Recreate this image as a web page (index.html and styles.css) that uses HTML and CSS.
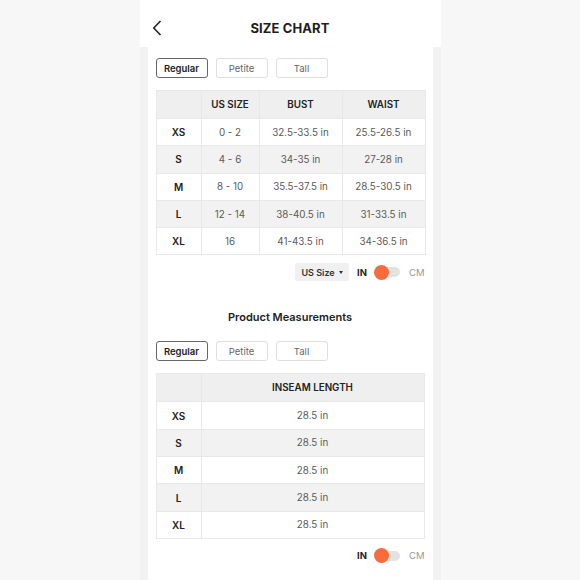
FILE: index.html
```html
<!DOCTYPE html>
<html>
<head>
<meta charset="utf-8">
<link rel="stylesheet" href="styles.css">
</head>
<body>
<div class="phone">
  <header class="topbar">
    <span class="back">
      <svg width="10" height="16" viewBox="0 0 10 16"><path d="M8.5 1 L1.8 8 L8.5 15" fill="none" stroke="#222" stroke-width="1.6"/></svg>
    </span>
    <h1 class="title">SIZE CHART</h1>
    <span></span>
  </header>
  <div class="content">
    <div class="card">
      <div class="tabs">
        <button class="tab active">Regular</button>
        <button class="tab">Petite</button>
        <button class="tab">Tall</button>
      </div>
      <table class="chart">
        <colgroup><col class="c0"><col class="c1"><col class="c2"><col class="c3"></colgroup>
        <thead><tr><th></th><th>US SIZE</th><th>BUST</th><th>WAIST</th></tr></thead>
        <tbody>
          <tr><th>XS</th><td>0 - 2</td><td>32.5-33.5 in</td><td>25.5-26.5 in</td></tr>
          <tr><th>S</th><td>4 - 6</td><td>34-35 in</td><td>27-28 in</td></tr>
          <tr><th>M</th><td>8 - 10</td><td>35.5-37.5 in</td><td>28.5-30.5 in</td></tr>
          <tr><th>L</th><td>12 - 14</td><td>38-40.5 in</td><td>31-33.5 in</td></tr>
          <tr><th>XL</th><td>16</td><td>41-43.5 in</td><td>34-36.5 in</td></tr>
        </tbody>
      </table>
      <div class="controls">
        <span class="select">US Size <span class="caret"></span></span>
        <span class="unit on">IN</span>
        <span class="switch"><span class="knob"></span></span>
        <span class="unit">CM</span>
      </div>

      <h2 class="subtitle">Product Measurements</h2>
      <div class="tabs">
        <button class="tab active">Regular</button>
        <button class="tab">Petite</button>
        <button class="tab">Tall</button>
      </div>
      <table class="chart">
        <colgroup><col class="c0"><col></colgroup>
        <thead><tr><th></th><th>INSEAM LENGTH</th></tr></thead>
        <tbody>
          <tr><th>XS</th><td>28.5 in</td></tr>
          <tr><th>S</th><td>28.5 in</td></tr>
          <tr><th>M</th><td>28.5 in</td></tr>
          <tr><th>L</th><td>28.5 in</td></tr>
          <tr><th>XL</th><td>28.5 in</td></tr>
        </tbody>
      </table>
      <div class="controls">
        <span class="unit on">IN</span>
        <span class="switch"><span class="knob"></span></span>
        <span class="unit">CM</span>
      </div>
    </div>
  </div>
</div>
</body>
</html>
```
FILE: styles.css
```css
* { box-sizing: border-box; }
html, body { margin: 0; padding: 0; }
body {
  background: #f7f7f8;
  font-family: Inter, "Noto Sans", "Liberation Sans", sans-serif;
  color: #222;
  height: 580px;
  overflow: hidden;
}
.phone {
  width: 301px;
  margin: 0 auto;
  background: #fff;
}
.topbar {
  height: 47px;
  display: grid;
  grid-template-columns: 1fr auto 1fr;
  align-items: center;
  background: #fff;
  padding: 0 12px;
}
.back { display: flex; align-items: center; padding-top: 9px; }
.title {
  margin: 0;
  font-size: 13px;
  font-weight: 700;
  letter-spacing: 0.1px;
  color: #1e1e1e;
  padding-top: 8px;
}
.content {
  background: #f2f2f3;
  padding: 0 8px;
}
.card {
  background: #fff;
  padding: 11px 8px 22px;
}
.tabs {
  display: flex;
  gap: 8px;
}
.tab {
  width: 52px;
  height: 20px;
  border: 1px solid #dedede;
  border-radius: 3px;
  background: #fff;
  font-family: inherit;
  font-size: 9.5px;
  color: #666;
  padding: 0;
}
.tab.active {
  border-color: #666;
  color: #222;
  font-weight: 600;
}
.chart {
  width: 269px;
  border-collapse: collapse;
  margin-top: 12px;
  border: 1px solid #ececec;
  table-layout: fixed;
}
.c0 { width: 45px; }
.c1 { width: 58px; }
.c2 { width: 83px; }
.c3 { width: 83px; }
.chart th, .chart td {
  border: 1px solid #e8e8e8;
  text-align: center;
  font-size: 9.8px;
  padding: 0;
}
.chart thead tr { height: 28px; background: #efefef; }
.chart thead th { font-weight: 600; color: #222; }
.chart tbody tr { height: 27.3px; }
.chart tbody tr:nth-child(even) { background: #f2f2f2; }
.chart tbody th { font-weight: 600; color: #222; font-size: 10px; }
.chart td { color: #5a5a5a; }
.controls {
  display: flex;
  justify-content: flex-end;
  align-items: center;
  margin-top: 8px;
  height: 18px;
}
.select {
  display: flex;
  align-items: center;
  gap: 4px;
  background: #f0f0f0;
  height: 18px;
  width: 54px;
  justify-content: center;
  font-size: 9px;
  font-weight: 600;
  color: #333;
  border-radius: 2px;
  margin-right: 8px;
}
.caret {
  width: 0; height: 0;
  border-left: 2.5px solid transparent;
  border-right: 2.5px solid transparent;
  border-top: 3px solid #333;
}
.unit {
  font-size: 9.5px;
  color: #999;
}
.unit.on { font-weight: 700; color: #222; margin-right: 8px; }
.switch {
  position: relative;
  width: 25px;
  height: 10px;
  background: #e2e2e2;
  border-radius: 5px;
  margin-right: 9px;
}
.knob {
  position: absolute;
  left: -1px;
  top: -2.5px;
  width: 15px;
  height: 15px;
  border-radius: 50%;
  background: #f96b3a;
}
.subtitle {
  margin: 29px 0 17px;
  text-align: center;
  font-size: 11px;
  font-weight: 600;
  color: #222;
}
```
